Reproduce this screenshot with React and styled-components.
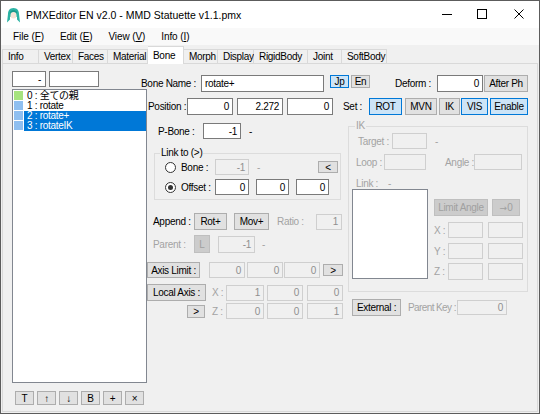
import React from "react";
import styled, { createGlobalStyle } from "styled-components";

const GlobalStyle = createGlobalStyle`
  html, body {
    margin: 0;
    padding: 0;
    background: #ffffff;
  }
  * {
    box-sizing: border-box;
  }
`;

const Window = styled.div`
  width: 540px;
  height: 414px;
  border: 1px solid #5c5c5c;
  background: #f0f0f0;
  display: flex;
  flex-direction: column;
  overflow: hidden;
  font-family: "Liberation Sans", "Noto Sans CJK JP", Arial, sans-serif;
  font-size: 10px;
  letter-spacing: -0.3px;
  color: #000;
`;

const TitleBar = styled.div`
  height: 27px;
  flex: none;
  background: #ffffff;
  display: flex;
  align-items: center;
  padding-left: 5px;
`;

const Title = styled.span`
  margin-left: 5px;
  font-size: 10.5px;
  letter-spacing: 0;
`;

const Controls = styled.div`
  margin-left: auto;
  display: flex;
  align-self: stretch;
`;

const Ctrl = styled.div`
  width: ${(p) => p.$w}px;
  display: flex;
  justify-content: center;
  padding-top: 8px;
`;

const MenuBar = styled.div`
  height: 17px;
  flex: none;
  background: #f9f9f9;
  display: flex;
  align-items: center;
  gap: 16px;
  padding-left: 12px;
  letter-spacing: -0.1px;
`;

const TabStrip = styled.div`
  height: 18px;
  flex: none;
  display: flex;
  align-items: flex-end;
  padding-left: 1px;
`;

const Tab = styled.div`
  width: ${(p) => p.$w}px;
  height: ${(p) => (p.$active ? 18 : 14)}px;
  margin-bottom: ${(p) => (p.$active ? -1 : 0)}px;
  padding-left: 5px;
  display: flex;
  align-items: center;
  padding-bottom: ${(p) => (p.$active ? 1 : 0)}px;
  background: ${(p) => (p.$active ? "#ffffff" : "#f0f0f0")};
  border: 1px solid #d9d9d9;
  border-bottom: none;
  border-left: ${(p) => (p.$first ? "1px solid #d9d9d9" : "none")};
  position: relative;
  z-index: ${(p) => (p.$active ? 1 : 0)};
`;

const Page = styled.div`
  flex: 1;
  margin: 0 1px 1px 1px;
  border: 1px solid #d9d9d9;
  display: flex;
  align-items: flex-start;
`;

const LeftCol = styled.div`
  width: 135px;
  margin: 7px 0 0 9px;
  flex: none;
  display: flex;
  flex-direction: column;
`;

const TopInputs = styled.div`
  display: flex;
  gap: 3px;
  height: 16px;
`;

const List = styled.div`
  width: 135px;
  height: 294px;
  margin-top: 2px;
  background: #ffffff;
  border: 1px solid #828790;
  padding-top: 1px;
`;

const ListRow = styled.div`
  display: flex;
  height: 10px;
  line-height: 10px;
`;

const Swatch = styled.span`
  flex: none;
  width: 9px;
  height: 9px;
  margin-left: 1px;
  background: ${(p) => p.$color};
`;

const RowText = styled.span`
  flex: 1;
  margin-left: 1px;
  padding-left: 3px;
  white-space: nowrap;
  background: ${(p) => (p.$sel ? "#0078d7" : "transparent")};
  color: ${(p) => (p.$sel ? "#ffffff" : "#000000")};
`;

const BottomBar = styled.div`
  display: flex;
  gap: 3px;
  margin: 8px 0 0 3px;
`;

const Main = styled.div`
  width: 381px;
  margin-top: 11px;
  flex: none;
  display: flex;
  flex-direction: column;
`;

const Row = styled.div`
  display: flex;
  align-items: center;
  flex: none;
  height: ${(p) => p.$h || 16}px;
  margin-top: ${(p) => p.$mt || 0}px;
  margin-left: ${(p) => p.$ml || 0}px;
`;

const Label = styled.span`
  flex: none;
  width: ${(p) => (p.$w ? `${p.$w}px` : "auto")};
  margin-left: ${(p) => p.$ml || 0}px;
  color: ${(p) => (p.$dim ? "#a3a3a3" : "#000000")};
  letter-spacing: ${(p) => (p.$tight ? "-0.6px" : "inherit")};
  white-space: nowrap;
`;

const Field = styled.div`
  flex: none;
  width: ${(p) => p.$w}px;
  height: ${(p) => p.$h || 16}px;
  margin-left: ${(p) => p.$ml || 0}px;
  border: 1px solid ${(p) => (p.$off ? "#cfcfcf" : "#7a7a7a")};
  background: ${(p) => (p.$off ? "#f0f0f0" : "#ffffff")};
  color: ${(p) => (p.$off ? "#8f8f8f" : "#000000")};
  display: flex;
  align-items: center;
  justify-content: ${(p) => (p.$left ? "flex-start" : "flex-end")};
  padding: 0 ${(p) => p.$pad ?? 3}px 0 3px;
  white-space: nowrap;
`;

const tones = {
  normal: { bg: "#e1e1e1", border: "#adadad", color: "#000000" },
  on: { bg: "#cce4f7", border: "#0078d7", color: "#000000" },
  off: { bg: "#cccccc", border: "#bfbfbf", color: "#a0a0a0" },
};

const Btn = styled.div`
  flex: none;
  width: ${(p) => p.$w}px;
  height: ${(p) => p.$h || 17}px;
  margin-left: ${(p) => (p.$ml === "auto" ? "auto" : `${p.$ml || 0}px`)};
  margin-right: ${(p) => p.$mr || 0}px;
  align-self: ${(p) => p.$self || "auto"};
  display: flex;
  align-items: center;
  justify-content: center;
  white-space: nowrap;
  background: ${(p) => tones[p.$tone || "normal"].bg};
  border: 1px solid ${(p) => tones[p.$tone || "normal"].border};
  color: ${(p) => tones[p.$tone || "normal"].color};
`;

const Arrow = styled.span`
  font-family: "DejaVu Sans", sans-serif;
  font-size: 9px;
  letter-spacing: 0;
`;

const Radio = styled.span`
  flex: none;
  width: 11px;
  height: 11px;
  border-radius: 50%;
  border: 1px solid #333333;
  background: #ffffff;
  display: flex;
  align-items: center;
  justify-content: center;

  &::after {
    content: "";
    width: 5px;
    height: 5px;
    border-radius: 50%;
    background: ${(p) => (p.$on ? "#333333" : "transparent")};
  }
`;

const Group = styled.div`
  position: relative;
  flex: none;
  width: ${(p) => p.$w}px;
  height: ${(p) => p.$h}px;
  margin-top: ${(p) => p.$mt || 0}px;
  margin-left: ${(p) => p.$ml || 0}px;
  border: 1px solid #dcdcdc;
  padding: ${(p) => p.$pad};
  display: flex;
  flex-direction: column;
`;

const Legend = styled.span`
  position: absolute;
  top: -7px;
  left: ${(p) => p.$x}px;
  padding: 0 1px;
  line-height: 12px;
  background: #f0f0f0;
  color: ${(p) => (p.$dim ? "#a3a3a3" : "#000000")};
`;

const Columns = styled.div`
  display: flex;
  align-items: flex-start;
`;

const MidCol = styled.div`
  width: 198px;
  flex: none;
  display: flex;
  flex-direction: column;
`;

const RightCol = styled.div`
  width: 180px;
  margin-left: 3px;
  flex: none;
  display: flex;
  flex-direction: column;
`;

const LinkBody = styled.div`
  display: flex;
  align-items: flex-start;
`;

const LinkList = styled.div`
  flex: none;
  width: 76px;
  height: 90px;
  margin-left: -4px;
  background: #ffffff;
  border: 1px solid #828790;
`;

const LimitCol = styled.div`
  margin-left: 6px;
  display: flex;
  flex-direction: column;
`;

const AppIcon = () => (
  <svg width="15" height="16" viewBox="0 0 15 16">
    <path
      d="M7.5 1C3.6 1 2 3.8 2 7L1 15.5 4 12.5V9.5C5.5 10.5 9.5 10.5 11 9.5V12.5L14 15.5 13 7C13 3.8 11.4 1 7.5 1Z"
      fill="#2bb3a4"
    />
    <ellipse cx="7.5" cy="8.3" rx="3" ry="3.2" fill="#f6e3d6" />
    <path d="M4 7C5 4 10 4 11 7L11 5C9.5 2.5 5.5 2.5 4 5Z" fill="#1c978b" />
  </svg>
);

const MinIcon = () => (
  <svg width="10" height="10" viewBox="0 0 10 10">
    <line x1="0" y1="5.5" x2="10" y2="5.5" stroke="#000" strokeWidth="1" />
  </svg>
);

const MaxIcon = () => (
  <svg width="10" height="10" viewBox="0 0 10 10">
    <rect x="0.5" y="0.5" width="9" height="9" fill="none" stroke="#000" strokeWidth="1" />
  </svg>
);

const CloseIcon = () => (
  <svg width="10" height="10" viewBox="0 0 10 10">
    <path d="M0.5 0.5L9.5 9.5M9.5 0.5L0.5 9.5" stroke="#000" strokeWidth="1" />
  </svg>
);

const tabs = [
  ["Info", 37],
  ["Vertex", 34],
  ["Faces", 35],
  ["Material", 40],
  ["Bone", 36],
  ["Morph", 34],
  ["Display", 36],
  ["RigidBody", 54],
  ["Joint", 34],
  ["SoftBody", 45],
];

const bones = [
  { label: "0 : 全ての親", color: "#a6e37f", sel: false },
  { label: "1 : rotate", color: "#8fbff0", sel: false },
  { label: "2 : rotate+", color: "#8fbff0", sel: true },
  { label: "3 : rotateIK", color: "#8fbff0", sel: true },
];

const listButtons = ["T", "↑", "↓", "B", "+", "×"];

export default function App() {
  return (
    <>
      <GlobalStyle />
      <Window>
        <TitleBar>
          <AppIcon />
          <Title>PMXEditor EN v2.0 - MMD Statuette v1.1.pmx</Title>
          <Controls>
            <Ctrl $w={36}>
              <MinIcon />
            </Ctrl>
            <Ctrl $w={34}>
              <MaxIcon />
            </Ctrl>
            <Ctrl $w={40}>
              <CloseIcon />
            </Ctrl>
          </Controls>
        </TitleBar>

        <MenuBar>
          <span>
            File (<u>F</u>)
          </span>
          <span>
            Edit (<u>E</u>)
          </span>
          <span>
            View (<u>V</u>)
          </span>
          <span>
            Info (<u>I</u>)
          </span>
        </MenuBar>

        <TabStrip>
          {tabs.map(([name, w], i) => (
            <Tab key={name} $w={w} $first={i === 0} $active={name === "Bone"}>
              {name}
            </Tab>
          ))}
        </TabStrip>

        <Page>
          <LeftCol>
            <TopInputs>
              <Field $w={34} $pad={4}>
                -
              </Field>
              <Field $w={50} />
            </TopInputs>
            <List>
              {bones.map((b) => (
                <ListRow key={b.label}>
                  <Swatch $color={b.color} />
                  <RowText $sel={b.sel}>{b.label}</RowText>
                </ListRow>
              ))}
            </List>
            <BottomBar>
              {listButtons.map((g) => (
                <Btn key={g} $w={19} $h={14}>
                  {g}
                </Btn>
              ))}
            </BottomBar>
          </LeftCol>

          <Main>
            <Row $h={17}>
              <Label $ml={-6} $w={60}>
                Bone Name :
              </Label>
              <Field $w={123} $h={17} $left>
                rotate+
              </Field>
              <Btn $w={19} $h={13} $ml={6} $tone="on" $self="flex-start">
                Jp
              </Btn>
              <Btn $w={19} $h={13} $ml={2} $self="flex-start">
                En
              </Btn>
              <Label $ml={25} $w={42}>
                Deform :
              </Label>
              <Field $w={46} $h={17}>
                0
              </Field>
              <Btn $w={44} $ml={1}>
                After Ph
              </Btn>
            </Row>

            <Row $h={17} $mt={6}>
              <Label $ml={1} $w={39}>
                Position :
              </Label>
              <Field $w={46} $h={17}>
                0
              </Field>
              <Field $w={46} $h={17} $ml={4}>
                2.272
              </Field>
              <Field $w={46} $h={17} $ml={4}>
                0
              </Field>
              <Label $ml={10} $w={26}>
                Set :
              </Label>
              <Btn $w={33} $tone="on">
                ROT
              </Btn>
              <Btn $w={32} $ml={3}>
                MVN
              </Btn>
              <Btn $w={21} $ml={2}>
                IK
              </Btn>
              <Btn $w={27} $ml={1} $tone="on">
                VIS
              </Btn>
              <Btn $w={38} $ml={2} $tone="on">
                Enable
              </Btn>
            </Row>

            <Columns>
              <MidCol>
                <Row $mt={8}>
                  <Label $ml={11} $w={45}>
                    P-Bone :
                  </Label>
                  <Field $w={38}>-1</Field>
                  <Label $ml={8}>-</Label>
                </Row>

                <Group $w={187} $h={47} $mt={14} $ml={7} $pad="5px 0 0 10px">
                  <Legend $x={5}>Link to (&gt;)</Legend>
                  <Row>
                    <Radio />
                    <Label $ml={5} $w={34}>
                      Bone :
                    </Label>
                    <Field $w={34} $off>
                      -1
                    </Field>
                    <Label $ml={8} $dim>
                      -
                    </Label>
                    <Btn $w={20} $h={12} $ml="auto" $mr={2}>
                      &lt;
                    </Btn>
                  </Row>
                  <Row $mt={4}>
                    <Radio $on />
                    <Label $ml={5} $w={34}>
                      Offset :
                    </Label>
                    <Field $w={34}>0</Field>
                    <Field $w={33} $ml={7}>
                      0
                    </Field>
                    <Field $w={33} $ml={7}>
                      0
                    </Field>
                  </Row>
                </Group>

                <Row $h={17} $mt={13}>
                  <Label $ml={6} $w={41}>
                    Append :
                  </Label>
                  <Btn $w={33}>Rot+</Btn>
                  <Btn $w={35} $ml={7}>
                    Mov+
                  </Btn>
                  <Label $ml={8} $w={39} $dim>
                    Ratio :
                  </Label>
                  <Field $w={26} $off>
                    1
                  </Field>
                </Row>

                <Row $h={18} $mt={5}>
                  <Label $ml={6} $w={41} $dim>
                    Parent :
                  </Label>
                  <Btn $w={16} $h={18} $tone="off">
                    L
                  </Btn>
                  <Field $w={37} $h={17} $ml={8} $off>
                    -1
                  </Field>
                  <Label $ml={7} $dim>
                    -
                  </Label>
                </Row>

                <Row $mt={9}>
                  <Btn $w={53} $h={16}>
                    Axis Limit :
                  </Btn>
                  <Field $w={36} $ml={9} $off>
                    0
                  </Field>
                  <Field $w={36} $ml={2} $off>
                    0
                  </Field>
                  <Field $w={36} $ml={1} $off>
                    0
                  </Field>
                  <Btn $w={20} $h={12} $ml={3}>
                    &gt;
                  </Btn>
                </Row>

                <Row $h={17} $mt={6}>
                  <Btn $w={59}>Local Axis :</Btn>
                  <Label $ml={6} $w={14} $dim>
                    X :
                  </Label>
                  <Field $w={38} $off>
                    1
                  </Field>
                  <Field $w={36} $ml={3} $off>
                    0
                  </Field>
                  <Field $w={36} $ml={4} $off>
                    0
                  </Field>
                </Row>

                <Row $mt={2}>
                  <Btn $w={18} $h={13} $ml={40}>
                    &gt;
                  </Btn>
                  <Label $ml={7} $w={14} $dim>
                    Z :
                  </Label>
                  <Field $w={38} $off>
                    0
                  </Field>
                  <Field $w={36} $ml={3} $off>
                    0
                  </Field>
                  <Field $w={36} $ml={4} $off>
                    1
                  </Field>
                </Row>
              </MidCol>

              <RightCol>
                <Group $w={180} $h={166} $mt={11} $pad="6px 0 0 7px">
                  <Legend $x={6} $dim>
                    IK
                  </Legend>
                  <Row>
                    <Label $ml={2} $w={34} $dim>
                      Target :
                    </Label>
                    <Field $w={35} $off />
                    <Label $ml={8} $dim>
                      -
                    </Label>
                  </Row>
                  <Row $mt={5}>
                    <Label $w={28} $dim>
                      Loop :
                    </Label>
                    <Field $w={42} $off />
                    <Label $ml={19} $w={29} $dim>
                      Angle :
                    </Label>
                    <Field $w={48} $off />
                  </Row>
                  <Row $h={12} $mt={7}>
                    <Label $w={32} $dim>
                      Link :
                    </Label>
                    <Label $dim>-</Label>
                  </Row>
                  <LinkBody>
                    <LinkList />
                    <LimitCol>
                      <Row $h={17} $mt={10}>
                        <Btn $w={54} $tone="off">
                          Limit Angle
                        </Btn>
                        <Btn $w={28} $ml={4} $tone="off">
                          <Arrow>→</Arrow>0
                        </Btn>
                      </Row>
                      <Row $mt={6}>
                        <Label $w={14} $dim>
                          X :
                        </Label>
                        <Field $w={35} $off />
                        <Field $w={35} $ml={5} $off />
                      </Row>
                      <Row $mt={5}>
                        <Label $w={14} $dim>
                          Y :
                        </Label>
                        <Field $w={35} $off />
                        <Field $w={35} $ml={5} $off />
                      </Row>
                      <Row $h={17} $mt={4}>
                        <Label $w={14} $dim>
                          Z :
                        </Label>
                        <Field $w={35} $h={17} $off />
                        <Field $w={35} $h={17} $ml={5} $off />
                      </Row>
                    </LimitCol>
                  </LinkBody>
                </Group>

                <Row $h={18} $mt={6}>
                  <Btn $w={49} $ml={4}>
                    External :
                  </Btn>
                  <Label $ml={7} $w={49} $dim $tight>
                    Parent Key :
                  </Label>
                  <Field $w={50} $h={15} $off>
                    0
                  </Field>
                </Row>
              </RightCol>
            </Columns>
          </Main>
        </Page>
      </Window>
    </>
  );
}
